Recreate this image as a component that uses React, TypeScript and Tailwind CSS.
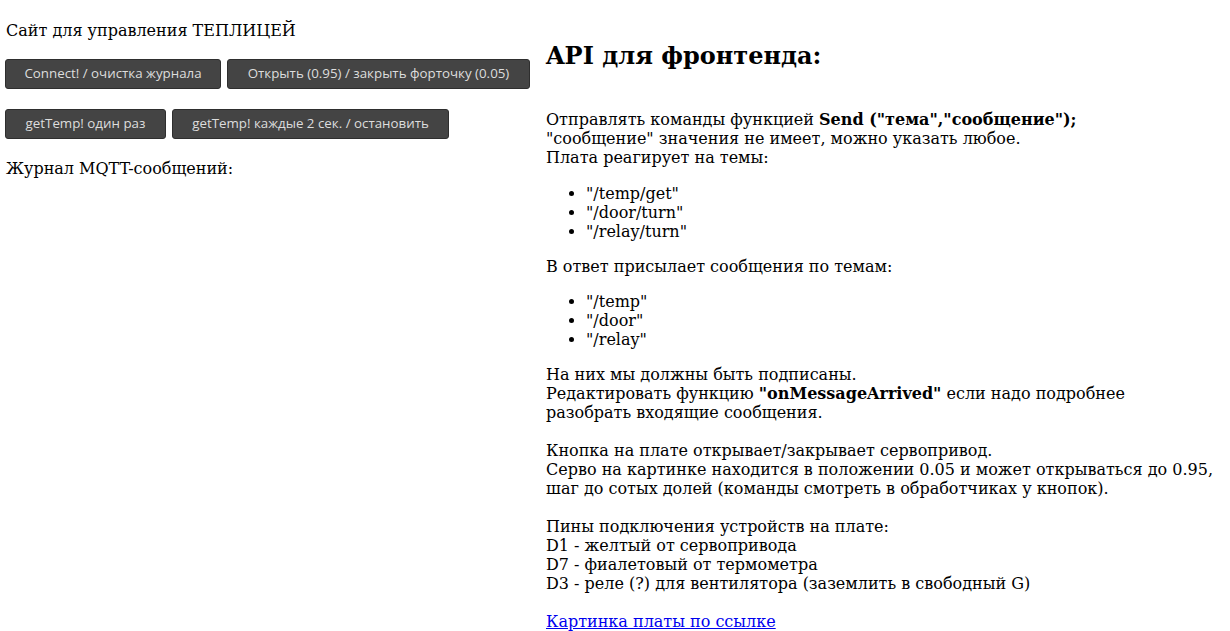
import React from "react";

const serif = "font-['DejaVu_Serif',serif]";

function Btn({ children, w }: { children: React.ReactNode; w: string }) {
  return (
    <button
      className={`h-[30px] ${w} shrink-0 rounded-[3px] border border-[#2e2e2e] bg-[#444444] text-[13.333px] text-[#dddddd] font-['Open_Sans',sans-serif] leading-none`}
    >
      {children}
    </button>
  );
}

export default function App() {
  return (
    <div className={`flex w-[1230px] h-[631px] bg-white text-black text-[16px] leading-[19px] ${serif}`}>
      <div className="w-[541px] shrink-0 pl-[5px]">
        <div className="mt-[21px] pl-[1px]">Сайт для управления ТЕПЛИЦЕЙ</div>
        <div className="mt-[19px] flex gap-[6px]">
          <Btn w="w-[216px]">Connect! / очистка журнала</Btn>
          <Btn w="w-[303px]">Открыть (0.95) / закрыть форточку (0.05)</Btn>
        </div>
        <div className="mt-[20px] flex gap-[6px]">
          <Btn w="w-[161px]">getTemp! один раз</Btn>
          <Btn w="w-[277px]">getTemp! каждые 2 сек. / остановить</Btn>
        </div>
        <div className="mt-[20px] pl-[1px]">Журнал MQTT-сообщений:</div>
      </div>
      <div className="pl-[5px] whitespace-nowrap">
        <h2 className="mt-[42px] text-[24px] leading-[28px] font-bold">API для фронтенда:</h2>
        <p className="mt-[40px]">
          Отправлять команды функцией <b>Send ("тема","сообщение");</b>
          <br />
          "сообщение" значения не имеет, можно указать любое.
          <br />
          Плата реагирует на темы:
        </p>
        <ul className="mt-[17px] list-disc pl-[40px]">
          <li>"/temp/get"</li>
          <li>"/door/turn"</li>
          <li>"/relay/turn"</li>
        </ul>
        <p className="mt-[16px]">В ответ присылает сообщения по темам:</p>
        <ul className="mt-[16px] list-disc pl-[40px]">
          <li>"/temp"</li>
          <li>"/door"</li>
          <li>"/relay"</li>
        </ul>
        <p className="mt-[16px]">
          На них мы должны быть подписаны.
          <br />
          Редактировать функцию <b>"onMessageArrived"</b> если надо подробнее
          <br />
          разобрать входящие сообщения.
          <br />
          <br />
          Кнопка на плате открывает/закрывает сервопривод.
          <br />
          Серво на картинке находится в положении 0.05 и может открываться до 0.95,
          <br />
          шаг до сотых долей (команды смотреть в обработчиках у кнопок).
          <br />
          <br />
          Пины подключения устройств на плате:
          <br />
          D1 - желтый от сервопривода
          <br />
          D7 - фиалетовый от термометра
          <br />
          D3 - реле (?) для вентилятора (заземлить в свободный G)
          <br />
          <br />
          <a href="#" className="text-[#0000ee] underline">Картинка платы по ссылке</a>
        </p>
      </div>
    </div>
  );
}
